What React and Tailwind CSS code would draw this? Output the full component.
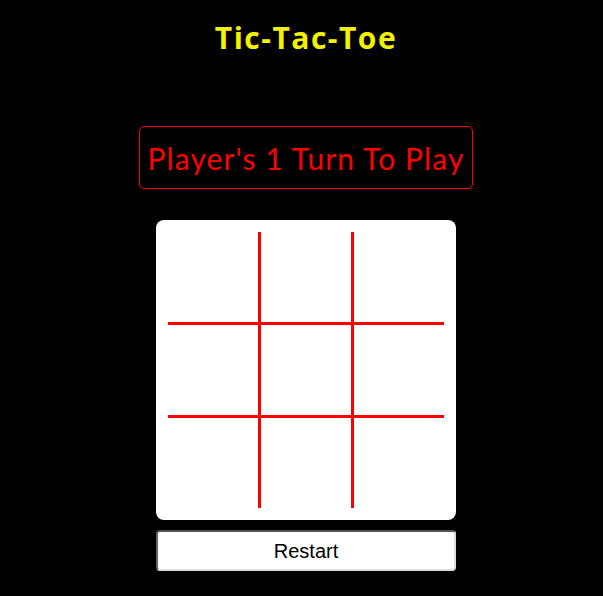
import { useState } from 'react'

const cells = Array.from({ length: 9 })

export default function App() {
  const [board, setBoard] = useState(Array(9).fill(''))
  const [player, setPlayer] = useState(1)

  const play = (i) => {
    if (board[i]) return
    const next = [...board]
    next[i] = player === 1 ? 'X' : 'O'
    setBoard(next)
    setPlayer(player === 1 ? 2 : 1)
  }

  const restart = () => {
    setBoard(Array(9).fill(''))
    setPlayer(1)
  }

  return (
    <div className="min-h-[596px] bg-black pl-[9px] flex flex-col items-center font-['Lato',sans-serif]">
      <h1 className="mt-[19px] h-[38px] leading-[38px] font-['Open_Sans',sans-serif] text-[30px] font-bold tracking-[1.5px] text-[#f2f200]">
        Tic-Tac-Toe
      </h1>

      <div className="mt-[69px] flex h-[63px] w-[334px] items-center justify-center rounded-[5px] border border-[#ff0000]">
        <span className="text-[30px] leading-none text-[#ff0000] tracking-[1.1px]">Player's {player} Turn To Play</span>
      </div>

      <div className="mt-[31px] h-[300px] w-[300px] rounded-[8px] bg-white p-[12px]">
        <div className="grid h-full w-full grid-cols-3 grid-rows-3 gap-[3px] bg-[#ff0000]">
          {cells.map((_, i) => (
            <button
              key={i}
              onClick={() => play(i)}
              className="flex items-center justify-center bg-white text-[48px] font-bold text-[#ff0000]"
            >
              {board[i]}
            </button>
          ))}
        </div>
      </div>

      <button
        onClick={restart}
        className="mt-[10px] h-[41px] w-[300px] rounded-[4px] border-2 border-t-[#555] border-l-[#666] border-r-[#ddd] border-b-[#ddd] bg-white font-['Liberation_Sans',sans-serif] text-[20px] text-black"
      >
        Restart
      </button>
    </div>
  )
}
